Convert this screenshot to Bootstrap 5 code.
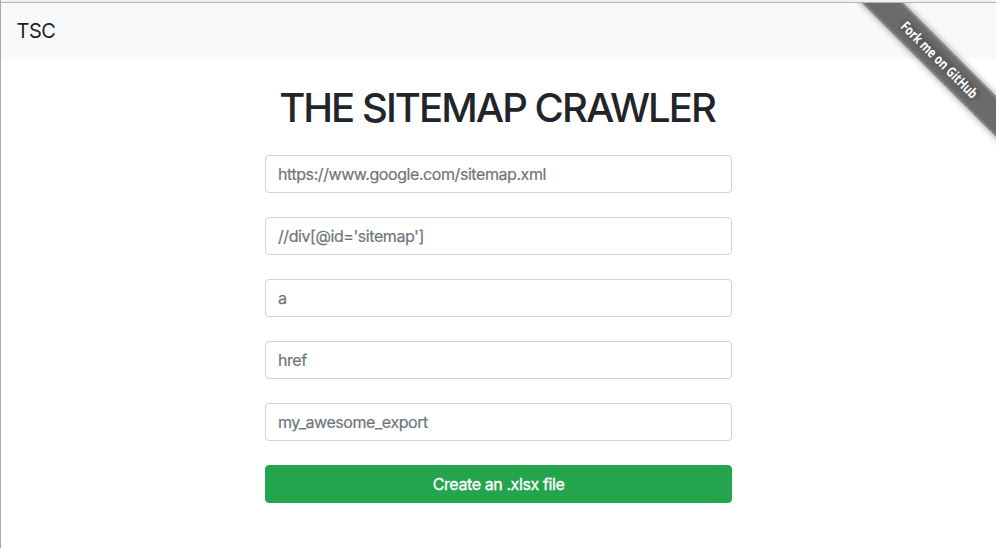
<!DOCTYPE html>
<html lang="en">
<head>
<meta charset="utf-8">
<meta name="viewport" content="width=device-width, initial-scale=1">
<title>The Sitemap Crawler</title>
<link href="https://cdn.jsdelivr.net/npm/bootstrap@5.3.0/dist/css/bootstrap.min.css" rel="stylesheet">
<style>
body { font-family: Inter, "Liberation Sans", sans-serif; color: #212529; height: 548px; overflow: hidden; border-left: 1px solid #a9a9a9; }
.top-edge { height: 3px; background: #f1f1f1; border-bottom: 1px solid #b3b3b3; }
.site-nav { height: 56px; background: #f8f9fa; padding: 0 15.5px; }
.site-nav .navbar-brand { font-size: 20px; letter-spacing: -.5px; color: rgba(0,0,0,.9); }
.crawler-form { width: 467px; }
.page-title { font-size: 40px; line-height: 48px; letter-spacing: -1.95px; white-space: nowrap; padding: 1px 3px 0 0; margin-bottom: 23px; }
.crawler-form .form-control { height: 38px; border-color: #ced4da; border-radius: 4px; letter-spacing: -.43px; -webkit-text-stroke: .2px; }
.crawler-form .form-control::placeholder { color: #6c757d; }
.btn-create { height: 38px; background: #23a44d; border-color: #23a44d; border-radius: 4px; letter-spacing: -.4px; -webkit-text-stroke: .35px; }
.fork-ribbon { width: 149px; height: 149px; top: 3px; right: 0; }
.fork-ribbon text { font: 700 14px "Open Sans", "Noto Sans", sans-serif; fill: #fff; }
</style>
</head>
<body>
<div class="top-edge"></div>
<nav class="navbar site-nav">
  <a class="navbar-brand m-0 p-0" href="#">TSC</a>
</nav>
<a href="#" class="fork-ribbon position-absolute" aria-label="Fork me on GitHub">
  <svg class="d-block" width="149" height="149" viewBox="0 0 149 149">
    <defs>
      <filter id="soft" x="-20%" y="-50%" width="140%" height="200%"><feGaussianBlur stdDeviation="3.5"/></filter>
      <filter id="glow" x="-20%" y="-50%" width="140%" height="200%"><feGaussianBlur stdDeviation="2"/></filter>
    </defs>
    <g transform="translate(92.8 57.2) rotate(45)">
      <rect x="-130" y="-14" width="260" height="28" fill="#000" opacity=".5" filter="url(#soft)"/>
      <rect x="-130" y="-14.3" width="260" height="28.6" fill="#6b6b6b"/>
      <path d="M-130-13H130M-130 13H130" stroke="#b5b5b5" stroke-dasharray="1 1" fill="none"/>
      <rect x="-52" y="-6" width="104" height="12" fill="#444" opacity=".45" filter="url(#glow)"/>
    </g>
    <text transform="translate(92.8 57.2) rotate(45)" x="-51.5" y="5" textLength="102" lengthAdjust="spacingAndGlyphs">Fork me on GitHub</text>
  </svg>
</a>
<main class="crawler-form mx-auto pt-4">
  <h1 class="page-title text-center">THE SITEMAP CRAWLER</h1>
  <form class="d-flex flex-column gap-4">
    <input class="form-control" type="text" placeholder="https://www.google.com/sitemap.xml" aria-label="Sitemap URL">
    <input class="form-control" type="text" placeholder="//div[@id='sitemap']" aria-label="XPath">
    <input class="form-control" type="text" placeholder="a" aria-label="Tag">
    <input class="form-control" type="text" placeholder="href" aria-label="Attribute">
    <input class="form-control" type="text" placeholder="my_awesome_export" aria-label="File name">
    <button class="btn btn-success btn-create w-100" type="button">Create an .xlsx file</button>
  </form>
</main>
<script src="https://cdn.jsdelivr.net/npm/bootstrap@5.3.0/dist/js/bootstrap.bundle.min.js"></script>
</body>
</html>
